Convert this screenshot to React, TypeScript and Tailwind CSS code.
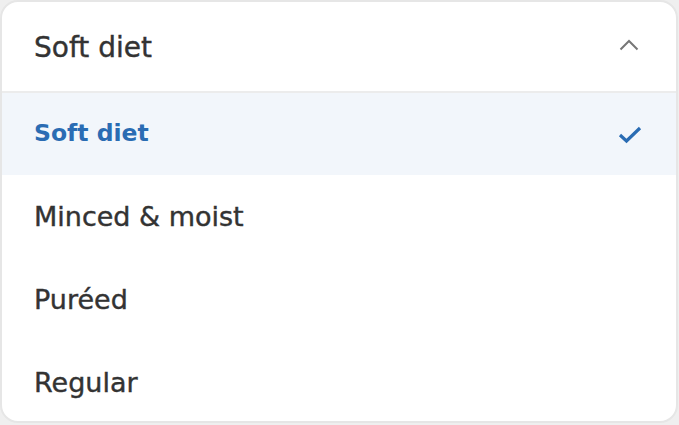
import React from "react";

const font = { fontFamily: '"DejaVu Sans", sans-serif' };

export default function App() {
  const options = ["Minced & moist", "Puréed", "Regular"];
  return (
    <div className="w-[679px] h-[425px] bg-[#efefef]" style={font}>
      <div className="w-[678px] h-[423px] rounded-[18px] border-2 border-[#e6e6e6] bg-white overflow-hidden flex flex-col">
        <div className="h-[91px] shrink-0 flex items-center justify-between pl-[32px] pr-[37px] pt-[3px] border-b-2 border-[#ececec]">
          <span className="text-[28px] text-[#333333] leading-none [-webkit-text-stroke:0.4px_#333333]">Soft diet</span>
          <svg width="20" height="12" viewBox="0 0 20 12" className="mt-[-6px]">
            <polyline points="1.5,10.5 10,2 18.5,10.5" fill="none" stroke="#777777" strokeWidth="2" />
          </svg>
        </div>
        <div className="h-[82px] shrink-0 flex items-center justify-between bg-[#f2f6fb] pl-[32px] pr-[34px]">
          <span className="text-[23.5px] font-bold text-[#2a6cb3] leading-none">Soft diet</span>
          <svg width="24" height="18" viewBox="0 0 24 18" className="mt-[2px]">
            <polyline points="2,9 8.5,15 22,2" fill="none" stroke="#2a6cb3" strokeWidth="3.2" />
          </svg>
        </div>
        {options.map((o) => (
          <div key={o} className="h-[83px] shrink-0 flex items-center pl-[32px]">
            <span className="text-[27px] text-[#333333] leading-none [-webkit-text-stroke:0.4px_#333333]">{o}</span>
          </div>
        ))}
      </div>
    </div>
  );
}
